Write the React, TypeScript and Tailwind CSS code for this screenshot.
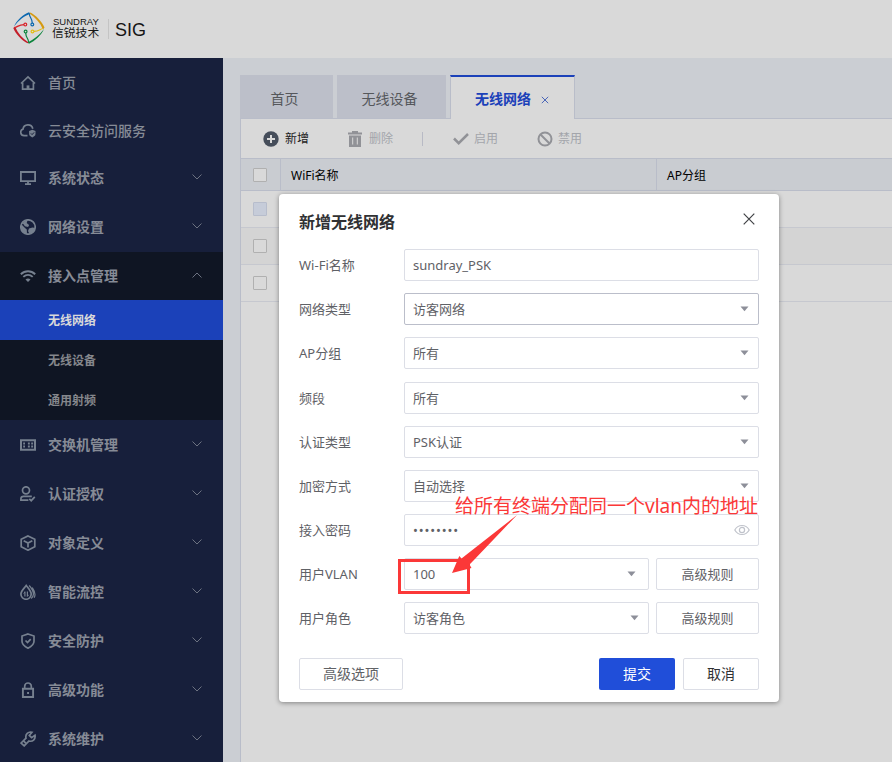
import type { ReactNode } from "react";
import clsx from "clsx";

const icons: Record<string, ReactNode> = {
    home: (
        <>
            <path d="M1 8.5 8 2l7 6.5" />
            <path d="M2.600 7.500v6.700h10.800V7.500" />
            <path d="M8 10.400v4" strokeWidth="2.800" />
        </>
    ),
    cloud: (
        <>
            <path d="M7.500 12.700H4.200A3.400 3.400 0 0 1 3 6.100a5 5 0 0 1 9.800-.4" />
            <path d="m12.300 6.800 3.200 1.200v3c0 1.700-1.600 2.700-3.200 3.400-1.600-.7-3.200-1.700-3.200-3.400V8z" fill="currentColor" stroke="none" />
            <path d="m10.900 10.400 1.200 1.200 2-2.200" stroke="#171f3b" strokeWidth="1" />
        </>
    ),
    monitor: (
        <>
            <path d="M.9 2h14.200v9.200H.9z" strokeWidth="1.800" />
            <path d="M8 11.200V14M5 14.100h6" strokeWidth="1.800" />
        </>
    ),
    globe: (
        <>
            <circle cx="8" cy="8" r="7.200" />
            <path d="M2 4.200C4 2.600 5.600 1.500 7.600 1.200L6.700 4l2.400 2-1 2-3.200-.8L3.300 5z" fill="currentColor" stroke="none" />
            <path d="M1.300 5.200 5 9l1.800 1.500L7 15C2.800 14.500 0 10.500 1.300 5.200zM9 9.500l3.500-.9 2.700.4c-.5 3-2.800 5.400-5.700 6L8 12z" fill="currentColor" stroke="none" />
        </>
    ),
    wifi: (
        <>
            <path d="M.8 6.200c4.200-4 10.200-4 14.400 0" strokeWidth="1.900" />
            <path d="M3.300 8.900c2.800-2.600 6.600-2.600 9.400 0" strokeWidth="1.900" />
            <path d="M5.500 11.500c1.500-1.300 3.500-1.300 5 0L8 13.900z" fill="currentColor" stroke="none" />
        </>
    ),
    switch: (
        <>
            <path d="M1 3.200h14v9.600H1z" strokeWidth="2" />
            <path d="M3.200 6.500h1.800M7.900 6.500h1.900M11.200 6.500h1.900M3.200 9.500h1.800M7.900 9.500h1.900M11.200 9.500h1.900" strokeWidth="2" />
        </>
    ),
    user: (
        <>
            <circle cx="6" cy="4.300" r="3.500" />
            <path d="M8.400 14.200H.9v-1.400c0-1.700 1.100-2.500 2.700-2.500h8.200" />
            <path d="m9.300 12.800 1.900 1.900 3.600-3.900" />
        </>
    ),
    cube: (
        <>
            <path d="M8 .9 14.800 4.300v7.400L8 15.200l-6.800-3.500V4.300z" />
            <path d="M3.700 5.800 8 8.100l4.300-2.300M8 8v4.500" />
        </>
    ),
    flow: (
        <>
            <path d="M6.200 1.500C8.500 4.500 11.200 7 11.200 10.100a5 5 0 0 1-10.300 0C.9 7 4 4.500 6.200 1.500z" />
            <path d="M4.900 7.500v5M7.400 7.500v5" strokeWidth="1.200" />
            <path d="M3.700 9.500 5 8M7.400 12.300 8.700 10.800" strokeWidth="1" />
            <path d="M9.200 1.500c3.300 3.700 4.400 5.700 4.200 8.900a5 5 0 0 1-2.300 4M12.300 3.500c2.500 3.700 3.700 6.900 1.900 10.200" strokeWidth="1.200" />
        </>
    ),
    shield: (
        <>
            <path d="M8 1 14 3v5.200c0 3.200-2.600 5.300-6 7-3.400-1.700-6-3.800-6-7V3z" />
            <path d="m5.500 7.500 2 2 3.200-3.400" />
        </>
    ),
    lock: (
        <>
            <path d="M2.900 6.800h10.200V15H2.900z" strokeWidth="1.900" />
            <path d="M4.700 6.500V4.200c0-4.300 6.600-4.300 6.600 0v2.300" />
            <path d="M7.100 10.900h1.900" strokeWidth="2" />
        </>
    ),
    wrench: (
        <>
            <path d="m12 1.200-2.700 3.200 2.300 2.300L15 4.200c.8 4-2.500 6.900-6 5.800L4.200 14.900 1.100 12 6 7.200C5 3.500 8.300.2 12 1.200z" />
            <path d="m3.500 9.800 2.500 2.500" />
        </>
    ),
};

const menu = [
    { icon: "home", label: "首页", height: "h-[49px]", plain: true },
    { icon: "cloud", label: "云安全访问服务", height: "h-[47px]", plain: true },
    { icon: "monitor", label: "系统状态", height: "h-[49px] pb-px" },
    { icon: "globe", label: "网络设置", height: "h-[49px] pb-px" },
    { icon: "wifi", label: "接入点管理", height: "h-12", children: ["无线网络", "无线设备", "通用射频"] },
    { icon: "switch", label: "交换机管理", height: "h-[49px]" },
    { icon: "user", label: "认证授权", height: "h-[49px]" },
    { icon: "cube", label: "对象定义", height: "h-[49px]" },
    { icon: "flow", label: "智能流控", height: "h-[49px]" },
    { icon: "shield", label: "安全防护", height: "h-[49px]" },
    { icon: "lock", label: "高级功能", height: "h-[49px]" },
    { icon: "wrench", label: "系统维护", height: "h-[49px]" },
];

function Logo() {
    return (
        <svg width="32" height="32" viewBox="0 0 32 32" fill="none" className="mb-0.5">
            <path d="M1 14.500C4 8 10 2.500 16 .3l1.500 1.500C11 4 6 8 1 14.500z" fill="#0b68b0" />
            <path d="M17.500.5C23 3.500 28.500 9 31.500 15.500L30 17.500C27 10.500 22.500 5.500 16.500 1.500z" fill="#d59a12" />
            <path d="M31 17C28 23.500 22 29 16 31.700L14.500 30.500C21 27.500 26 23.500 31 17z" fill="#0c843c" />
            <path d="M14.500 31.300C8.500 28 3 22.500.3 16L2 14.500C5 21.500 9.500 26.500 15.500 30.500z" fill="#c31f2a" />
            <g strokeWidth="1.200">
                <path d="M2 15.500c3-1 4-2.800 9-2.900" stroke="#d8232a" />
                <circle cx="12.300" cy="12.600" r="1.400" stroke="#d8232a" />
                <path d="M16.500 2c-.5 3 2.700 4 2.800 9" stroke="#0b68b0" />
                <circle cx="19.300" cy="12.500" r="1.400" stroke="#0b68b0" />
                <path d="M30 16.500c-3 .5-4 2.700-9 2.800" stroke="#e3bd16" />
                <circle cx="19.500" cy="19.500" r="1.400" stroke="#e3bd16" />
                <path d="M15.500 30c.5-3-2.700-4-2.800-9" stroke="#0c843c" />
                <circle cx="12.600" cy="19.600" r="1.400" stroke="#0c843c" />
            </g>
        </svg>
    );
}

function Header() {
    return (
        <header className="flex h-[58px] items-center bg-[#d9d9d9] pl-[13px] text-[#151515]">
            <Logo />
            <div className="ml-[7px] flex w-12 flex-col pb-[3px]">
                <span className="h-[11px] pl-px font-['Liberation_Sans'] text-[9.5px] leading-[11px]">SUNDRAY</span>
                <span className="h-3 whitespace-nowrap font-['Liberation_Sans','Noto_Sans_CJK_SC',sans-serif] text-[11.800px] leading-3">
                    信锐技术
                </span>
            </div>
            <div className="ml-2 h-5 w-px bg-[#c4c4c4]" />
            <span className="ml-1.5 pt-0.5 font-['Liberation_Sans'] text-lg leading-5">SIG</span>
        </header>
    );
}

function Sidebar() {
    return (
        <aside className="w-[223px] shrink-0 bg-[#171f3b]">
            {menu.map((item) => (
                <div key={item.label}>
                    <div className={clsx("flex items-center pl-5 pr-5", item.height, item.children && "bg-[#0f1523]")}>
                        <svg
                            width="16"
                            height="16"
                            viewBox="0 0 16 16"
                            fill="none"
                            stroke="currentColor"
                            strokeWidth="1.700"
                            className="text-[#76808f]"
                        >
                            {icons[item.icon]}
                        </svg>
                        <span className={clsx("ml-3 flex-1 text-sm leading-5 text-[#868b96]", item.plain ? "font-medium" : "font-bold")}>
                            {item.label}
                        </span>
                        {!item.plain && (
                            <svg width="12" height="8" viewBox="0 0 12 8" fill="none" stroke="#6c7281" className="mb-0.5">
                                <path d={item.children ? "M1.500 6.500 6 2l4.500 4.500" : "M1.500 1.500 6 6l4.500-4.500"} />
                            </svg>
                        )}
                    </div>
                    {item.children?.map((child, i) => (
                        <div
                            key={child}
                            className={clsx(
                                "flex h-10 items-center pl-12 pt-0.5 text-xs font-bold",
                                i === 0 ? "bg-[#1b41b9] text-[#d9d9d9]" : "bg-[#0f1523] text-[#85878c]"
                            )}
                        >
                            {child}
                        </div>
                    ))}
                </div>
            ))}
        </aside>
    );
}

function Toolbar() {
    return (
        <div className="flex h-[39px] items-center text-xs text-[#a3a5ab]">
            <svg width="16" height="16" viewBox="0 0 16 16" className="ml-[22px]">
                <circle cx="8" cy="8" r="7.700" fill="#454d5a" />
                <path d="M8 4v8M4 8h8" stroke="#d9d9d9" strokeWidth="2" />
            </svg>
            <span className="ml-1.5 text-[#1c1c1c]">新增</span>
            <svg width="14" height="16" viewBox="0 0 14 16" className="ml-[39px]" fill="#919297">
                <path d="M0 1.500h4V0h6v1.500h4v2H0zM1 4.500h12V16H1z" />
                <path d="M4.700 6.500v7M9.300 6.500v7" stroke="#d9d9d9" />
            </svg>
            <span className="ml-[7px]">删除</span>
            <div className="ml-[29px] h-3.5 w-px bg-[#b8bac5]" />
            <svg width="16" height="12" viewBox="0 0 16 12" className="ml-[30px]" fill="none" stroke="#919297" strokeWidth="2.500">
                <path d="m1 5.500 4.700 4.700L15 1" />
            </svg>
            <span className="ml-[5px]">启用</span>
            <svg width="16" height="16" viewBox="0 0 16 16" className="ml-[39px]" fill="none" stroke="#919297" strokeWidth="2">
                <circle cx="8" cy="8" r="6.500" />
                <path d="m3.500 3.500 9 9" />
            </svg>
            <span className="ml-[5px]">禁用</span>
        </div>
    );
}

function Checkbox({ disabled }: { disabled?: boolean }) {
    return (
        <div className="flex w-[39px] shrink-0 items-center pl-3">
            <div className={clsx("size-3.5 rounded-[1px] border", disabled ? "border-[#b7bdcc] bg-[#c6ccd9]" : "border-[#b0b0b0] bg-[#d9d9d9]")} />
        </div>
    );
}

function WirelessList() {
    return (
        <main className="flex min-w-0 flex-1 flex-col bg-[#cbced3] pl-[17px] pt-[17px]">
            <div className="flex h-11 text-sm text-[#55575b]">
                <div className="flex w-[93px] items-center justify-center border-b border-[#b9bdc9] bg-[#bcbfc9] pr-1 pt-1">首页</div>
                <div className="w-1 border-b border-[#b9bdc9]" />
                <div className="flex w-[109px] items-center justify-center border-b border-[#b9bdc9] bg-[#bcbfc9] pr-1 pt-1">无线设备</div>
                <div className="w-1 border-b border-[#b9bdc9]" />
                <div className="flex w-[125px] items-center border-x border-t-2 border-x-[#b9bdc9] border-t-[#1b41b9] bg-[#d9d9d9] pl-6 pt-0.5 font-bold text-[#1b41b9]">
                    无线网络
                    <svg width="8" height="8" viewBox="0 0 8 8" className="ml-2.5 mt-0.5" stroke="#4a66b9">
                        <path d="m.8.8 6.400 6.400M7.200.8.8 7.200" />
                    </svg>
                </div>
                <div className="flex-1 border-b border-[#b9bdc9]" />
            </div>
            <div className="flex-1 border-l border-[#b9bdc9] bg-[#d9d9d9]">
                <Toolbar />
                <div className="flex h-[33px] border-y border-[#b9bdc9] bg-[#c9ccd1] text-xs text-black">
                    <Checkbox />
                    <div className="flex w-[377px] items-center border-x border-[#b9bdc9] pl-2.5 pt-[3px]">WiFi名称</div>
                    <div className="flex items-center pl-2.5 pt-[3px]">AP分组</div>
                </div>
                {[0, 1, 2].map((row) => (
                    <div key={row} className={clsx("flex h-[37px] border-b border-[#c6c8cf]", row === 1 && "bg-[#d4d4d4]")}>
                        <Checkbox disabled={row === 0} />
                    </div>
                ))}
            </div>
        </main>
    );
}

type FieldProps = {
    label: string;
    value: string;
    type?: "text" | "password" | "select";
    rule?: boolean;
    className?: string;
    arrow?: string;
    active?: boolean;
};

function Field({ label, value, type = "select", rule, className, arrow = "mr-[9px]", active }: FieldProps) {
    return (
        <div className={clsx("flex h-8 items-center text-[13px] text-[#5f6166]", className)}>
            <label className="w-[105px] pt-0.5">{label}</label>
            <div className={clsx("flex h-8 flex-1 items-center rounded-[2px] border pl-2", active ? "border-[#bbbeca]" : "border-[#dcdee6]")}>
                <span className={clsx("flex-1 pt-0.5", type === "password" && "tracking-[0.85px]")}>{value}</span>
                {type === "select" && (
                    <svg width="9" height="6" viewBox="0 0 9 6" className={clsx("mb-px", arrow)}>
                        <path d="M.5.5h8l-4 4.700z" fill="#8d8f99" />
                    </svg>
                )}
                {type === "password" && (
                    <svg width="16" height="12" viewBox="0 0 16 12" className="mr-2" fill="none" stroke="#c0c3cb" strokeWidth="1.200">
                        <path d="M.8 6C4 0 12 0 15.200 6 12 12 4 12 .8 6z" />
                        <circle cx="8" cy="6" r="2.600" />
                    </svg>
                )}
            </div>
            {rule && <button className="ml-[7px] h-8 w-[103px] rounded-[2px] border border-[#dcdee6] pt-px">高级规则</button>}
        </div>
    );
}

function WirelessDialog() {
    return (
        <div className="absolute left-[279px] top-[194px] flex h-[508px] w-[500px] flex-col rounded bg-white px-5 shadow-[0_1px_5px_rgba(0,0,0,0.4)]">
            <div className="flex h-[55px] items-center justify-between pr-1">
                <h2 className="text-base font-bold text-[#303133]">新增无线网络</h2>
                <svg width="12" height="12" viewBox="0 0 12 12" stroke="#404245" strokeWidth="1.200" className="mb-1.5">
                    <path d="m.7.7 10.600 10.600M11.300.7.7 11.300" />
                </svg>
            </div>
            <div className="flex flex-col gap-3">
                <Field label="Wi-Fi名称" value="sundray_PSK" type="text" />
                <Field label="网络类型" value="访客网络" active />
                <Field label="AP分组" value="所有" />
                <Field label="频段" value="所有" className="mt-px" />
                <Field label="认证类型" value="PSK认证" />
                <Field label="加密方式" value="自动选择" />
                <Field label="接入密码" value="••••••••" type="password" />
                <Field label="用户VLAN" value="100" rule arrow="mr-3" />
                <Field label="用户角色" value="访客角色" rule />
            </div>
            <div className="mt-6 flex text-sm">
                <button className="h-8 w-[104px] rounded-[2px] border border-[#dcdee6] text-[#606266]">高级选项</button>
                <button className="ml-auto h-8 w-[76px] rounded-[2px] bg-[#204ed9] text-white">提交</button>
                <button className="ml-2 h-8 w-[76px] rounded-[2px] border border-[#dcdee6] text-[#303133]">取消</button>
            </div>
        </div>
    );
}

function Annotation() {
    return (
        <>
            <div className="absolute left-[398px] top-[559px] h-[35px] w-[72px] border-3 border-[#fb3838]" />
            <svg width="66" height="60" viewBox="0 0 66 60" className="absolute left-[452px] top-[515px]" fill="#fb3838">
                <path d="M65 0 9.500 43.500 7.300 41 0 58l19.500-5L17.500 49.500 21 46z" />
            </svg>
            <p className="absolute left-[455px] top-[494px] whitespace-nowrap text-[19px] leading-6 text-[#fb3838]">
                给所有终端分配同一个vlan内的地址
            </p>
        </>
    );
}

export default function App() {
    return (
        <div className="relative flex h-[762px] w-[892px] flex-col overflow-hidden font-['Noto_Sans','Noto_Sans_CJK_SC',sans-serif]">
            <Header />
            <div className="flex min-h-0 flex-1">
                <Sidebar />
                <WirelessList />
            </div>
            <WirelessDialog />
            <Annotation />
        </div>
    );
}
